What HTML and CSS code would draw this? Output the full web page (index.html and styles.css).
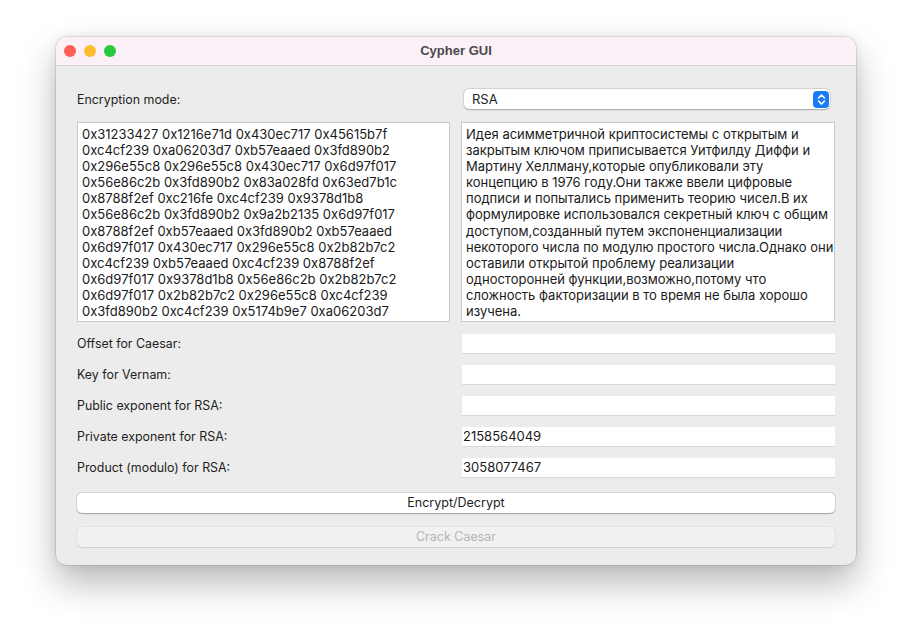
FILE: index.html
```html
<!DOCTYPE html>
<html>
<head>
<meta charset="utf-8">
<link rel="stylesheet" href="styles.css">
</head>
<body>
<div class="window">
  <div class="titlebar">
    <div class="lights">
      <span class="light red"></span>
      <span class="light yellow"></span>
      <span class="light green"></span>
    </div>
    <div class="title">Cypher GUI</div>
  </div>
  <div class="content">
    <div class="row-top">
      <div class="label">Encryption mode:</div>
      <div class="select">
        <span class="select-text">RSA</span>
        <span class="select-btn">
          <svg width="9" height="13" viewBox="0 0 9 13"><path d="M1.5 5 L4.5 2 L7.5 5 M1.5 8 L4.5 11 L7.5 8" fill="none" stroke="#fff" stroke-width="1.6" stroke-linecap="round" stroke-linejoin="round"/></svg>
        </span>
      </div>
    </div>
    <div class="texts">
      <div class="textarea hex">0x31233427 0x1216e71d 0x430ec717 0x45615b7f<br>0xc4cf239 0xa06203d7 0xb57eaaed 0x3fd890b2<br>0x296e55c8 0x296e55c8 0x430ec717 0x6d97f017<br>0x56e86c2b 0x3fd890b2 0x83a028fd 0x63ed7b1c<br>0x8788f2ef 0xc216fe 0xc4cf239 0x9378d1b8<br>0x56e86c2b 0x3fd890b2 0x9a2b2135 0x6d97f017<br>0x8788f2ef 0xb57eaaed 0x3fd890b2 0xb57eaaed<br>0x6d97f017 0x430ec717 0x296e55c8 0x2b82b7c2<br>0xc4cf239 0xb57eaaed 0xc4cf239 0x8788f2ef<br>0x6d97f017 0x9378d1b8 0x56e86c2b 0x2b82b7c2<br>0x6d97f017 0x2b82b7c2 0x296e55c8 0xc4cf239<br>0x3fd890b2 0xc4cf239 0x5174b9e7 0xa06203d7</div>
      <div class="textarea ru">Идея асимметричной криптосистемы с открытым и<br>закрытым ключом приписывается Уитфилду Диффи и<br>Мартину Хеллману,которые опубликовали эту<br>концепцию в 1976 году.Они также ввели цифровые<br>подписи и попытались применить теорию чисел.В их<br>формулировке использовался секретный ключ с общим<br>доступом,созданный путем экспоненциализации<br>некоторого числа по модулю простого числа.Однако они<br>оставили открытой проблему реализации<br>односторонней функции,возможно,потому что<br>сложность факторизации в то время не была хорошо<br>изучена.</div>
    </div>
    <div class="fields">
      <div class="field-row"><div class="label">Offset for Caesar:</div><div class="input"></div></div>
      <div class="field-row"><div class="label">Key for Vernam:</div><div class="input"></div></div>
      <div class="field-row"><div class="label">Public exponent for RSA:</div><div class="input"></div></div>
      <div class="field-row"><div class="label">Private exponent for RSA:</div><div class="input">2158564049</div></div>
      <div class="field-row"><div class="label">Product (modulo) for RSA:</div><div class="input">3058077467</div></div>
    </div>
    <div class="buttons">
      <div class="button">Encrypt/Decrypt</div>
      <div class="button disabled">Crack Caesar</div>
    </div>
  </div>
</div>
</body>
</html>
```

FILE: styles.css
```css
html, body {
  margin: 0;
  padding: 0;
  background: #ffffff;
  width: 912px;
  height: 640px;
  overflow: hidden;
}
body {
  font-family: Inter, "Liberation Sans", Arial, sans-serif;
  font-size: 13px;
  color: #1e1e1e;
}
.window {
  margin: 37px 0 0 56px;
  width: 800px;
  height: 528px;
  border-radius: 10px;
  background: #ececec;
  box-shadow: 0 0 0 0.5px rgba(0,0,0,0.18), 0 18px 36px rgba(0,0,0,0.28), 0 0 12px rgba(0,0,0,0.08);
  overflow: hidden;
  display: flex;
  flex-direction: column;
}
.titlebar {
  height: 28px;
  background: #fbeff8;
  border-bottom: 1px solid #d9d2d7;
  display: flex;
  align-items: center;
  position: relative;
  flex-shrink: 0;
}
.lights {
  display: flex;
  gap: 8px;
  padding-left: 8px;
}
.light {
  width: 12px;
  height: 12px;
  border-radius: 50%;
  display: block;
}
.red { background: #fe5f57; }
.yellow { background: #febc2e; }
.green { background: #28c840; }
.title {
  position: absolute;
  left: 0;
  right: 0;
  top: 0;
  height: 28px;
  line-height: 28px;
  text-align: center;
  font-family: "Liberation Sans", Arial, sans-serif;
  font-weight: bold;
  font-size: 13px;
  color: #4c4a4c;
}
.content {
  padding: 23px 21px 0 21px;
  display: flex;
  flex-direction: column;
}
.row-top {
  display: grid;
  grid-template-columns: 373px 1fr;
  column-gap: 11px;
  align-items: center;
  height: 20px;
}
.label {
  font-size: 12.4px;
  color: #1e1e1e;
}
.select {
  margin-left: 3px;
  margin-right: 5px;
  height: 20px;
  background: #fff;
  border-radius: 5px;
  box-shadow: 0 0 0 0.5px rgba(0,0,0,0.12), 0 0.5px 1.5px rgba(0,0,0,0.25);
  display: flex;
  align-items: center;
  justify-content: space-between;
}
.select-text {
  padding-left: 8px;
  font-size: 13px;
}
.select-btn {
  width: 16px;
  height: 17px;
  margin-right: 1px;
  background: #1a7cf5;
  border-radius: 4px;
  display: flex;
  align-items: center;
  justify-content: center;
}
.texts {
  margin-top: 13px;
  display: grid;
  grid-template-columns: 373px 374px;
  column-gap: 11px;
}
.textarea {
  height: 200px;
  box-sizing: border-box;
  background: #fff;
  border: 1px solid #c9c9c9;
  padding: 3px 0 0 4px;
  font-size: 13px;
  line-height: 16.1px;
  white-space: nowrap;
  overflow: hidden;
  color: #1a1a1a;
}
.fields {
  margin-top: 12px;
  display: flex;
  flex-direction: column;
  gap: 12px;
}
.field-row {
  display: grid;
  grid-template-columns: 385px 373px;
  align-items: center;
  height: 19px;
}
.input {
  height: 19px;
  line-height: 19px;
  background: #fff;
  box-shadow: 0 0.5px 0 #c4c4c4;
  padding-left: 1px;
  font-size: 13px;
  color: #1a1a1a;
}
.buttons {
  margin-top: 16px;
  display: flex;
  flex-direction: column;
  gap: 14px;
}
.button {
  height: 20px;
  line-height: 20px;
  text-align: center;
  background: #fff;
  border-radius: 5px;
  box-shadow: 0 0 0 0.5px rgba(0,0,0,0.1), 0 0.5px 1.5px rgba(0,0,0,0.28);
  font-size: 12.5px;
  color: #1e1e1e;
}
.button.disabled {
  background: #f1f1f1;
  color: #b4b4b4;
  box-shadow: 0 0 0 0.5px rgba(0,0,0,0.06), 0 0.5px 1px rgba(0,0,0,0.1);
}
```
